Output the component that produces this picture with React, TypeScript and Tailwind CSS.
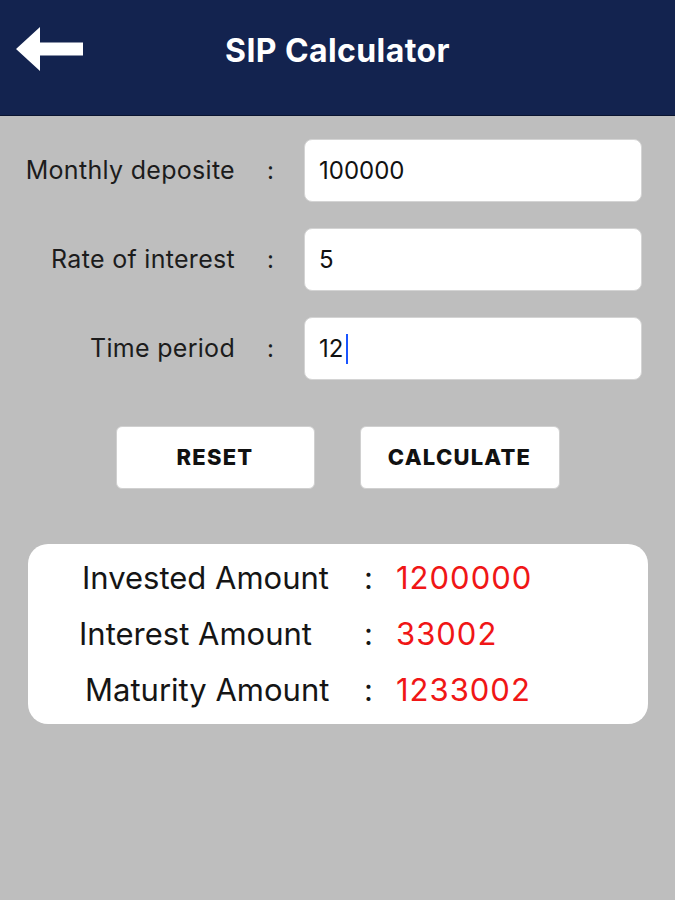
import { useState } from "react"

const fields = [
  { label: "Monthly deposite", value: "100000" },
  { label: "Rate of interest", value: "5" },
  { label: "Time period", value: "12" },
]

const results = [
  { label: "Invested Amount", value: "1200000", pad: "pl-[54px]" },
  { label: "Interest Amount", value: "33002", pad: "pl-[51px]" },
  { label: "Maturity Amount", value: "1233002", pad: "pl-[57px]" },
]

function BackArrow() {
  return (
    <svg width="70" height="46" viewBox="0 0 70 46" fill="white">
      <path d="M1 22 L25 0 L25 15.5 L68 15.5 L68 28.5 L25 28.5 L25 44 Z" />
    </svg>
  )
}

export default function App() {
  const [values, setValues] = useState(fields.map((f) => f.value))

  return (
    <div
      className="flex min-h-[900px] w-[675px] flex-col bg-[#bebebe]"
      style={{ fontFamily: "Inter, 'Liberation Sans', sans-serif" }}
    >
      <header className="relative flex h-[116px] items-center justify-center border-b border-[#0a1430] bg-[#13234f]">
        <button type="button" className="absolute left-[15px] top-[27px]">
          <BackArrow />
        </button>
        <h1 className="mt-[-14px] text-[32px] font-bold tracking-[0.4px] text-white">
          SIP Calculator
        </h1>
      </header>

      <div className="flex flex-col gap-[26px] pt-[23px]">
        {fields.map((field, i) => (
          <div key={field.label} className="flex items-center">
            <label className="w-[235px] text-right text-[25px] tracking-[0.3px] text-[#1c1c1c]">
              {field.label}
            </label>
            <span className="w-[69px] pl-[2px] text-center text-[24px] text-[#1c1c1c]">:</span>
            <div className="relative">
              <input
                value={values[i]}
                onChange={(e) =>
                  setValues(values.map((v, j) => (j === i ? e.target.value : v)))
                }
                className="h-[63px] w-[338px] rounded-[8px] border border-[#d4d4d4] bg-white px-[14px] text-[24px] text-[#111] caret-[#1a55ff] outline-none"
              />
              {i === 2 ? (
                <span className="pointer-events-none absolute left-[42px] top-[17px] h-[30px] w-[2px] bg-[#1a55ff]" />
              ) : null}
            </div>
          </div>
        ))}
      </div>

      <div className="mt-[46px] flex justify-center gap-[45px]">
        <button
          type="button"
          className="h-[63px] w-[199px] rounded-[6px] border border-[#d0d0d0] bg-white text-[22px] font-extrabold tracking-[1.2px] text-[#111]"
        >
          RESET
        </button>
        <button
          type="button"
          className="h-[63px] w-[200px] rounded-[6px] border border-[#d0d0d0] bg-white text-[22px] font-extrabold tracking-[1.2px] text-[#111]"
        >
          CALCULATE
        </button>
      </div>

      <div className="mx-[28px] mt-[55px] flex h-[180px] w-[620px] flex-col justify-center rounded-[20px] bg-white">
        {results.map((r) => (
          <div key={r.label} className="flex h-[56px] items-center text-[31px]">
            <span className={`w-[336px] ${r.pad} text-[#151515]`}>{r.label}</span>
            <span className="w-[32px] text-left text-[#151515]">:</span>
            <span className="tracking-[1px] text-[#f01616]">{r.value}</span>
          </div>
        ))}
      </div>
    </div>
  )
}
